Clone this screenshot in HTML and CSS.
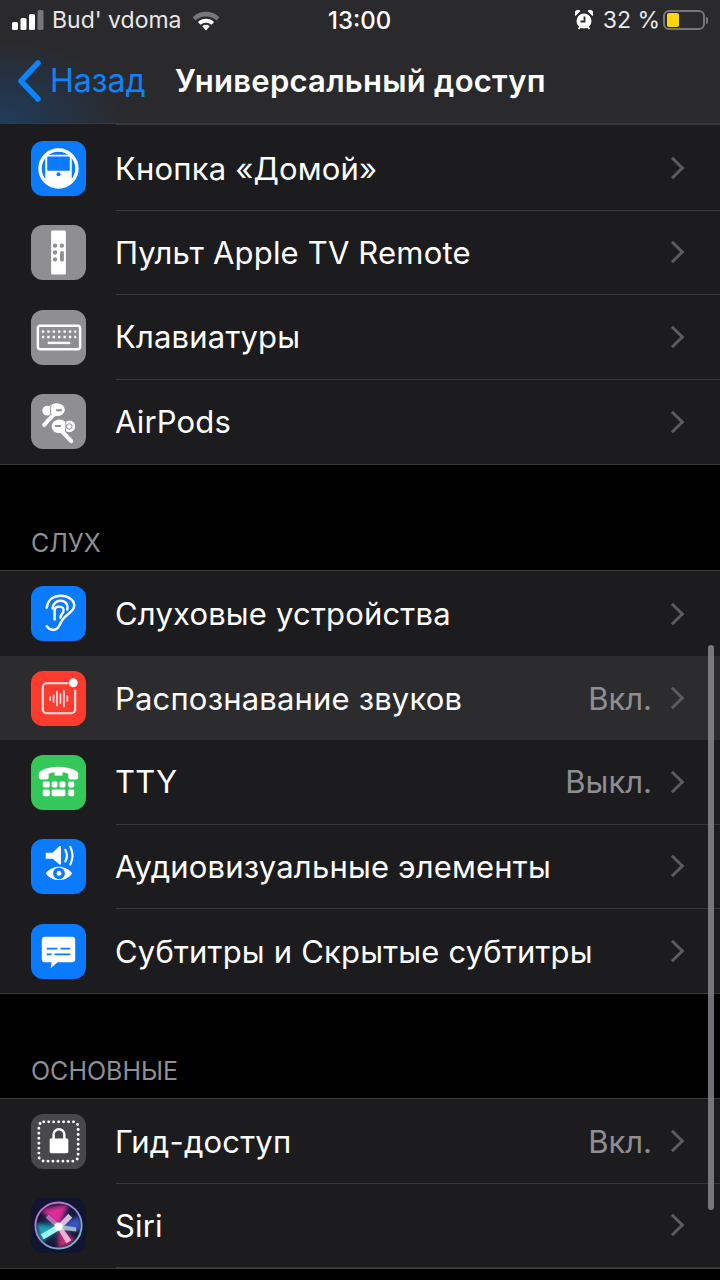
FILE: index.html
```html
<!DOCTYPE html>
<html>
<head>
    <title>Универсальный доступ</title>
    <link rel="stylesheet" href="styles.css">
</head>
<body>
    <header class="top">
        <div class="status">
            <div class="status_left">
                <svg class="signal" width="32" height="20" viewBox="0 0 32 20"><rect x="0" y="12" width="6" height="8" rx="1.5" fill="#fff"/><rect x="8.500" y="8" width="6" height="12" rx="1.500" fill="#fff"/><rect x="17" y="4" width="6" height="16" rx="1.500" fill="#fff"/><rect x="25.500" y="0" width="6" height="20" rx="1.500" fill="#77777a"/></svg>
                <span class="carrier">Bud' vdoma</span>
                <svg class="wifi" width="30" height="21" viewBox="0 0 30 22"><path d="M1 7.500C9 0 21 0 29 7.500L26 11C20 5.500 10 5.500 4 11Z" fill="#77777a"/><path d="M6.500 12.500C11.500 8 18.500 8 23.500 12.500L20.800 15.500C17.500 12.600 12.500 12.600 9.200 15.500Z" fill="#fff"/><path d="M11 17C13.500 15 16.500 15 19 17L15 21.500Z" fill="#fff"/></svg>
            </div>
            <div class="clock">13:00</div>
            <div class="status_right">
                <svg width="18" height="20" viewBox="0 0 18 20"><circle cx="9" cy="11" r="7.500" fill="#fff"/><path d="M0.500 6a3.500 3.500 0 0 1 5-5ZM17.500 6a3.500 3.500 0 0 0-5-5Z" fill="#fff"/><path d="M9.500 6.500v5H5.500" stroke="#2a2a2c" stroke-width="1.800" fill="none"/><path d="M3.500 19l2-2.500M14.500 19l-2-2.500" stroke="#fff" stroke-width="1.800"/></svg>
                <span class="percent">32 %</span>
                <div class="battery"><div class="battery_fill"></div></div>
                <div class="battery_tip"></div>
            </div>
        </div>
        <nav class="nav">
            <div class="back">
                <svg width="28" height="42" viewBox="0 0 28 42"><path d="M23 3L6 21l17 18" stroke="#0a84ff" stroke-width="5.500" fill="none" stroke-linecap="round" stroke-linejoin="round"/></svg>
                <span>Назад</span>
            </div>
            <h1>Универсальный доступ</h1>
        </nav>
    </header>

    <main class="scroll">
        <div class="prev_row"><div class="prev_line"></div></div>
        <section class="group first">
            <div class="row">
                <div class="icon blue">
                    <svg viewBox="0 0 56 56">
                        <defs><clipPath id="home_clip"><circle cx="28" cy="28" r="19"/></clipPath></defs>
                        <circle cx="28" cy="28" r="18.800" fill="none" stroke="#fff" stroke-width="3.500"/>
                        <path d="M14.500 16a2 2 0 0 1 2-2h23a2 2 0 0 1 2 2V48H14.500Z" fill="#fff" clip-path="url(#home_clip)"/>
                        <rect x="16.500" y="15.800" width="23" height="14.500" rx="1" fill="#0a7aff"/>
                        <circle cx="28" cy="33.800" r="2" fill="#0a7aff"/>
                    </svg>
                </div>
                <div class="row_body"><span class="label">Кнопка «Домой»</span><span class="chev"></span></div>
            </div>
            <div class="row">
                <div class="icon gray">
                    <svg viewBox="0 0 56 56"><rect x="20.500" y="5.500" width="15" height="45" rx="1" fill="#fff"/><g fill="#8e8e93"><circle cx="24.500" cy="21" r="2.200"/><circle cx="31.500" cy="21" r="2.200"/><circle cx="24.500" cy="28" r="2.200"/><circle cx="24.500" cy="35" r="2.200"/><rect x="29.500" y="26.500" width="4" height="11" rx="2"/></g></svg>
                </div>
                <div class="row_body"><span class="label">Пульт Apple TV Remote</span><span class="chev"></span></div>
            </div>
            <div class="row">
                <div class="icon gray">
                    <svg viewBox="0 0 56 56"><rect x="7" y="16" width="43" height="24" rx="2.500" fill="none" stroke="#fff" stroke-width="2.500"/><g stroke="#fff" stroke-width="2.500" stroke-dasharray="2.500 3" fill="none"><path d="M11 22h35"/><path d="M11 27.500h35"/></g><path d="M17 33.500h23" stroke="#fff" stroke-width="2.500"/></svg>
                </div>
                <div class="row_body"><span class="label">Клавиатуры</span><span class="chev"></span></div>
            </div>
            <div class="row">
                <div class="icon gray">
                    <svg viewBox="0 0 56 56">
                        <g fill="#fff">
                            <circle cx="16.500" cy="17" r="5"/>
                            <ellipse cx="26" cy="16" rx="8.500" ry="6.500"/>
                            <ellipse cx="29" cy="33" rx="8" ry="7"/>
                            <circle cx="39" cy="33" r="6"/>
                        </g>
                        <path d="M24 20L13.500 31.500M30.500 37L41 48" stroke="#fff" stroke-width="4.200" stroke-linecap="round"/>
                        <path d="M20.500 11.500c-.8 3-.8 7 0 10M35 27.500c.8 3 .8 7 0 10" stroke="#8e8e93" stroke-width="1" fill="none"/>
                        <path d="M25.500 16.500h6M24.500 32.500h6" stroke="#8e8e93" stroke-width="2"/>
                        <circle cx="39" cy="33" r="2.800" fill="none" stroke="#8e8e93" stroke-width="1"/>
                    </svg>
                </div>
                <div class="row_body last"><span class="label">AirPods</span><span class="chev"></span></div>
            </div>
        </section>

        <div class="section_title title_hearing">СЛУХ</div>
        <section class="group">
            <div class="row">
                <div class="icon blue">
                    <svg viewBox="0 0 56 56"><g fill="none" stroke="#fff" stroke-width="2.500" stroke-linecap="round"><path d="M16 41c3 4 8 5 11 2 3-3 3-7 7-11 5-5 10-7 10-12 0-6-6-10-14-10-8 0-13 5-14 12"/><path d="M22 23c0-5 4-8 8-8 6 0 8 5 7 9"/><path d="M24 34v-9c0-3 2-4 5-4s5 2 4 5c-.5 2-3 3-3 6"/></g></svg>
                </div>
                <div class="row_body no_line"><span class="label">Слуховые устройства</span><span class="chev"></span></div>
            </div>
            <div class="row active">
                <div class="icon red">
                    <svg viewBox="0 0 56 56"><path d="M38 12.500H16a4 4 0 0 0-4 4V39a4 4 0 0 0 4 4h25a4 4 0 0 0 4-4V19" fill="none" stroke="#ffe1de" stroke-width="2.200"/><circle cx="43" cy="12" r="4.500" fill="#fff"/><g stroke="#ffe1de" stroke-width="1.800" stroke-linecap="round"><path d="M19.500 26.500v3M23 24.500v7M26.500 21v14M30 23.500v9M33.500 20v16M37 25.500v5"/></g></svg>
                </div>
                <div class="row_body no_line"><span class="label">Распознавание звуков</span><span class="value">Вкл.</span><span class="chev"></span></div>
            </div>
            <div class="row">
                <div class="icon green">
                    <svg viewBox="0 0 56 56"><path d="M8 19c0-3 9-7 20-7s20 4 20 7v4c0 1-1 2-2 2h-6c-1 0-2-1-2-2v-4c-5-2-15-2-20 0v4c0 1-1 2-2 2h-6c-1 0-2-1-2-2Z" fill="#fff"/><path d="M24 17h8v4h-8Z" fill="#fff"/><g fill="#fff"><rect x="12" y="27" width="7" height="6" rx="1.500"/><rect x="21" y="27" width="6" height="6" rx="1.500"/><rect x="29" y="27" width="6" height="6" rx="1.500"/><rect x="38" y="27" width="6" height="6" rx="1.500"/><rect x="12" y="35" width="7" height="7" rx="1.500"/><rect x="21" y="35" width="14" height="7" rx="1.500"/><rect x="38" y="35" width="6" height="7" rx="1.500"/></g></svg>
                </div>
                <div class="row_body"><span class="label">TTY</span><span class="value">Выкл.</span><span class="chev"></span></div>
            </div>
            <div class="row">
                <div class="icon blue">
                    <svg viewBox="0 0 56 56"><path d="M15 14h7l7-7h1.500v19H29l-7-6h-7Z" fill="#fff"/><g fill="none" stroke="#fff" stroke-width="2.200" stroke-linecap="round"><path d="M35 11c2 4 2 8 0 12"/><path d="M40 8c3 6 3 12 0 18"/></g><path d="M15 35c7-9 20-9 27 0-7 9-20 9-27 0Z" fill="#fff"/><circle cx="28.500" cy="35" r="6" fill="#0a7aff"/><circle cx="28.500" cy="35" r="2.500" fill="#fff"/></svg>
                </div>
                <div class="row_body"><span class="label">Аудиовизуальные элементы</span><span class="chev"></span></div>
            </div>
            <div class="row">
                <div class="icon blue">
                    <svg viewBox="0 0 56 56"><path d="M14 13h28a3 3 0 0 1 3 3v20a3 3 0 0 1-3 3H27l-7 6 1-6h-7a3 3 0 0 1-3-3V16a3 3 0 0 1 3-3Z" fill="#fff"/><g stroke="#0a7aff" stroke-width="1.800"><path d="M16 25h11M30 25h10"/><path d="M16 31h5M24 31h16"/></g></svg>
                </div>
                <div class="row_body last"><span class="label">Субтитры и Скрытые субтитры</span><span class="chev"></span></div>
            </div>
        </section>

        <div class="section_title title_main">ОСНОВНЫЕ</div>
        <section class="group">
            <div class="row">
                <div class="icon dark">
                    <svg viewBox="0 0 56 56"><rect x="8" y="8" width="40" height="40" rx="5" fill="none" stroke="#fff" stroke-width="3" stroke-dasharray="0 5.050" stroke-linecap="round"/><rect x="19" y="25" width="19" height="15" rx="1.500" fill="#fff"/><path d="M23 26v-5a5.500 5.500 0 0 1 11 0v5" fill="none" stroke="#fff" stroke-width="2.500"/></svg>
                </div>
                <div class="row_body"><span class="label">Гид-доступ</span><span class="value">Вкл.</span><span class="chev"></span></div>
            </div>
            <div class="row">
                <div class="icon siri">
                    <svg viewBox="0 0 56 56">
                        <defs>
                            <radialGradient id="siri_bg"><stop offset="0" stop-color="#24406e"/><stop offset="1" stop-color="#10122c"/></radialGradient>
                            <linearGradient id="siri_ring" x1="0" y1="0" x2="1" y2="1"><stop offset="0" stop-color="#d865d8"/><stop offset=".55" stop-color="#8d8fd0"/><stop offset="1" stop-color="#6fd0c8"/></linearGradient>
                            <filter id="siri_blur" x="-30%" y="-30%" width="160%" height="160%"><feGaussianBlur stdDeviation="2.200"/></filter>
                            <filter id="siri_blur_small" x="-30%" y="-30%" width="160%" height="160%"><feGaussianBlur stdDeviation=".8"/></filter>
                            <clipPath id="siri_clip"><circle cx="28" cy="28" r="22.500"/></clipPath>
                        </defs>
                        <circle cx="28" cy="28" r="23.500" fill="url(#siri_bg)" stroke="url(#siri_ring)" stroke-width="2"/>
                        <g clip-path="url(#siri_clip)">
                            <g filter="url(#siri_blur)">
                                <path d="M28 29L10 12 38 6Z" fill="#e02a98"/>
                                <path d="M28 29L5 26 10 46Z" fill="#1aa0b8"/>
                                <path d="M28 29L28 52 46 44Z" fill="#c82c78"/>
                                <path d="M28 29L50 18 52 34Z" fill="#3a55c8"/>
                            </g>
                            <g filter="url(#siri_blur_small)">
                                <path d="M29 26L10 37 13 42 30 32Z" fill="#9ffcf0"/>
                                <path d="M26 29L36 46 41 43 30 27Z" fill="#f3c8e4" opacity=".85"/>
                                <path d="M26 29L38 16 42 20 30 32Z" fill="#f2d4f2" opacity=".85"/>
                                <path d="M27 27L46 30 46 34 27 32Z" fill="#c8e8d8" opacity=".7"/>
                                <path d="M29 27L18 17 15 20 27 31Z" fill="#d8a0e8" opacity=".6"/>
                            </g>
                            <circle cx="28" cy="29" r="4" fill="#fff" filter="url(#siri_blur_small)"/>
                        </g>
                    </svg>
                </div>
                <div class="row_body"><span class="label">Siri</span><span class="chev"></span></div>
            </div>
        </section>
    </main>

    <div class="scrollbar"></div>
</body>
</html>
```

FILE: styles.css
```css
html, body {
    margin: 0;
    padding: 0;
}

body {
    width: 720px;
    height: 1280px;
    overflow: hidden;
    position: relative;
    background-color: #000;
    color: #fff;
    font-family: "Inter", "Roboto", sans-serif;
}

/* Shapka */
.top {
    height: 124px;
    background: radial-gradient(ellipse 125px 85px at 0 124px, #1f3c5c 0%, rgba(42, 42, 44, 0) 100%), #2a2a2c;
    border-bottom: 1px solid #38383a;
    box-sizing: border-box;
}

.status {
    height: 40px;
    display: flex;
    align-items: center;
    justify-content: space-between;
    padding: 0 12px 0 12px;
    font-size: 23px;
    position: relative;
}

.status_left, .status_right {
    display: flex;
    align-items: center;
}

.carrier {
    margin-left: 8px;
    color: #e8e8ea;
}

.wifi {
    margin-left: 9px;
}

.clock {
    position: absolute;
    left: 328px;
    top: 6px;
    font-size: 24px;
    font-weight: 500;
}

.percent {
    margin-left: 10px;
    color: #e8e8ea;
}

.battery {
    margin-left: 3px;
    border: 2px solid #77777a;
    border-radius: 6px;
    padding: 1px 2px;
    width: 34px;
    height: 14px;
}

.battery_fill {
    width: 12px;
    height: 14px;
    background-color: #ffd60a;
    border-radius: 2px;
}

.battery_tip {
    width: 2px;
    height: 7px;
    margin-left: 1px;
    background-color: #77777a;
    border-radius: 0 2px 2px 0;
}

.nav {
    height: 84px;
    display: flex;
    align-items: center;
    padding-left: 15px;
    padding-bottom: 3px;
    box-sizing: border-box;
}

.back {
    display: flex;
    align-items: center;
    width: 160px;
    color: #0a84ff;
    font-size: 32px;
}

.back span {
    margin-left: 7px;
}

.nav h1 {
    margin: 0;
    font-size: 31px;
    font-weight: 600;
    letter-spacing: 0.25px;
}

/* Spisok */
.prev_row {
    height: 2.400px;
    padding-left: 116px;
    background-color: #1c1c1e;
}

.prev_line {
    height: 1px;
    background-color: #38383a;
}

.group {
    background-color: #1c1c1e;
    border-top: 1px solid #38383a;
    border-bottom: 1px solid #38383a;
}

.group.first {
    border-top: none;
}

.section_title {
    color: #8e8e93;
    font-size: 25px;
    padding-left: 31px;
    height: 34px;
    line-height: 34px;
}

.title_hearing {
    margin-top: 61.500px;
    margin-bottom: 10px;
}

.title_main {
    margin-top: 60px;
    margin-bottom: 10px;
}

.row {
    display: flex;
    align-items: center;
    height: 84.400px;
    padding-left: 31px;
}

.row.active {
    background-color: #2c2c2e;
}

.row_body {
    flex: 1;
    height: 100%;
    display: flex;
    align-items: center;
    margin-left: 30px;
    padding-right: 37px;
    border-bottom: 1px solid #38383a;
    box-sizing: border-box;
}

.row_body.last, .row_body.no_line {
    border-bottom: none;
}

.label {
    flex: 1;
    margin-left: -1px;
    font-size: 31px;
    letter-spacing: 0.18px;
}

.value {
    color: #8e8e93;
    font-size: 31px;
    margin-right: 13px;
}

.chev {
    width: 13px;
    height: 13px;
    border-top: 3.500px solid #5c5c60;
    border-right: 3.500px solid #5c5c60;
    transform: rotate(45deg);
    margin-right: 2px;
}

.icon {
    width: 55px;
    height: 55px;
    border-radius: 12px;
    flex-shrink: 0;
}

.icon svg {
    display: block;
    width: 100%;
    height: 100%;
}

.blue { background-color: #0a7aff; }
.gray { background-color: #8e8e93; }
.red { background-color: #ff3b30; }
.green { background-color: #34c759; }
.dark { background-color: #48484a; }
.siri { background-color: #101530; }

.scrollbar {
    position: absolute;
    left: 708px;
    top: 645px;
    width: 6px;
    height: 565px;
    border-radius: 3px;
    background-color: rgba(150, 150, 155, 0.75);
}
```
